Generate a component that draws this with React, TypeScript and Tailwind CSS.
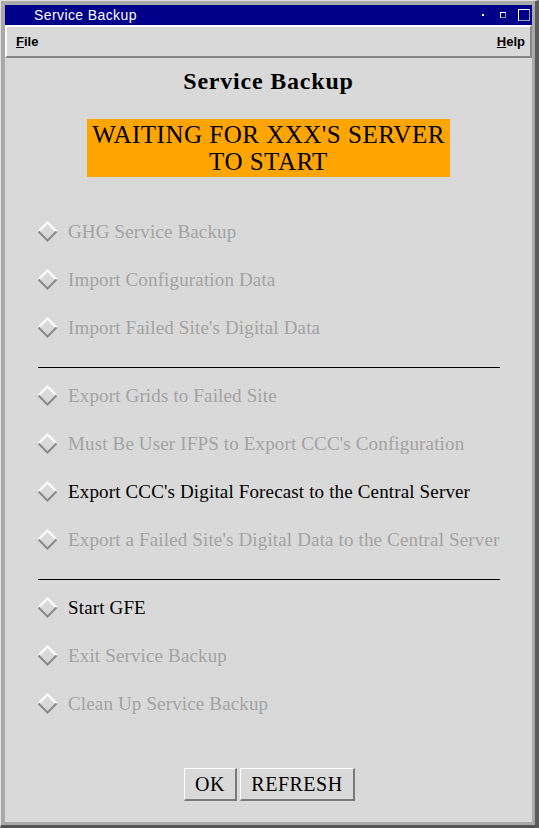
import React from 'react'

const serif = { fontFamily: '"Liberation Serif", "Times New Roman", serif' }
const sans = { fontFamily: '"Liberation Sans", Arial, sans-serif' }

type Item = { label: string; enabled?: boolean }

const groups: Item[][] = [
  [
    { label: 'GHG Service Backup' },
    { label: 'Import Configuration Data' },
    { label: "Import Failed Site's Digital Data" },
  ],
  [
    { label: 'Export Grids to Failed Site' },
    { label: "Must Be User IFPS to Export CCC's Configuration" },
    { label: "Export CCC's Digital Forecast to the Central Server", enabled: true },
    { label: "Export a Failed Site's Digital Data to the Central Server" },
  ],
  [
    { label: 'Start GFE', enabled: true },
    { label: 'Exit Service Backup' },
    { label: 'Clean Up Service Backup' },
  ],
]

function Diamond() {
  return (
    <svg width="21" height="21" viewBox="0 0 21 21" className="shrink-0">
      <polyline points="1.5,10.5 10.5,1.5 19.5,10.5" fill="none" stroke="#ffffff" strokeWidth="2" />
      <polyline points="1.5,10.5 10.5,19.5 19.5,10.5" fill="none" stroke="#8a8a8a" strokeWidth="2" />
    </svg>
  )
}

function Row({ item }: { item: Item }) {
  return (
    <div className="h-[48px] flex items-center pl-[32px] gap-[10px]">
      <Diamond />
      <span
        className={`text-[19px] leading-none tracking-[0.15px] whitespace-nowrap ${item.enabled ? 'text-black' : 'text-[#a3a3a3]'}`}
        style={serif}
      >
        {item.label}
      </span>
    </div>
  )
}

function Btn({ children, w }: { children: React.ReactNode; w: string }) {
  return (
    <button
      className={`${w} h-[33px] bg-[#d9d9d9] border-t border-l border-white border-r-2 border-b-2 border-r-[#7a7a7a] border-b-[#7a7a7a] text-[20px] leading-none tracking-[0.5px] text-black`}
      style={serif}
    >
      {children}
    </button>
  )
}

export default function App() {
  return (
    <div className="w-[539px] h-[828px] bg-[#a9a9a9] border-t border-l border-[#e0e0e0] border-r-4 border-b-[3px] border-r-[#5a5a5a] border-b-[#555555] pt-[4px] pl-[4px] pr-[3px] pb-[3px] overflow-hidden">
      <div className="h-full flex flex-col bg-[#d9d9d9]">
        {/* title bar */}
        <div className="h-[20px] bg-[#00008b] flex items-center text-white">
          <span className="ml-[29px] text-[14px] leading-none tracking-[0.4px]" style={sans}>
            Service Backup
          </span>
          <div className="ml-auto flex items-center mr-[2px]">
            <div className="w-[2px] h-[2px] bg-white mr-[16px]" />
            <div className="w-[6px] h-[6px] border-t border-l border-white border-r border-b border-r-[#9a9a9a] border-b-[#9a9a9a] mr-[12px]" />
            <div className="w-[12px] h-[12px] border-t border-l border-white border-r border-b border-r-[#9a9a9a] border-b-[#9a9a9a]" />
          </div>
        </div>

        {/* menu bar */}
        <div className="h-[33px] flex items-center justify-between border-t-2 border-l-2 border-white border-b-2 border-r-2 border-b-[#858585] border-r-[#858585] pl-[9px] pr-[5px] text-[13px] font-bold text-black" style={sans}>
          <span><span className="underline">F</span>ile</span>
          <span><span className="underline">H</span>elp</span>
        </div>

        {/* body */}
        <div className="flex-1 flex flex-col">
          <h1 className="mt-[9px] text-center text-[24px] leading-[28px] font-bold tracking-[0.8px] text-black" style={serif}>
            Service Backup
          </h1>
          <div
            className="mt-[24px] mx-auto w-[363px] h-[58px] bg-[#ffa500] flex flex-col items-center justify-center text-[25px] leading-[27px] tracking-[0.5px] text-black"
            style={serif}
          >
            <span>WAITING FOR XXX'S SERVER</span>
            <span>TO START</span>
          </div>

          <div className="mt-[30px]">
            {groups[0].map((it) => <Row key={it.label} item={it} />)}
          </div>
          <div className="mt-[16px] ml-[33px] w-[462px] h-px bg-black" />
          <div className="mt-[3px]">
            {groups[1].map((it) => <Row key={it.label} item={it} />)}
          </div>
          <div className="mt-[16px] ml-[33px] w-[462px] h-px bg-black" />
          <div className="mt-[3px]">
            {groups[2].map((it) => <Row key={it.label} item={it} />)}
          </div>

          <div className="mt-[41px] flex justify-center gap-[3px] pl-[2px]">
            <Btn w="w-[53px]">OK</Btn>
            <Btn w="w-[115px]">REFRESH</Btn>
          </div>
        </div>
      </div>
    </div>
  )
}
